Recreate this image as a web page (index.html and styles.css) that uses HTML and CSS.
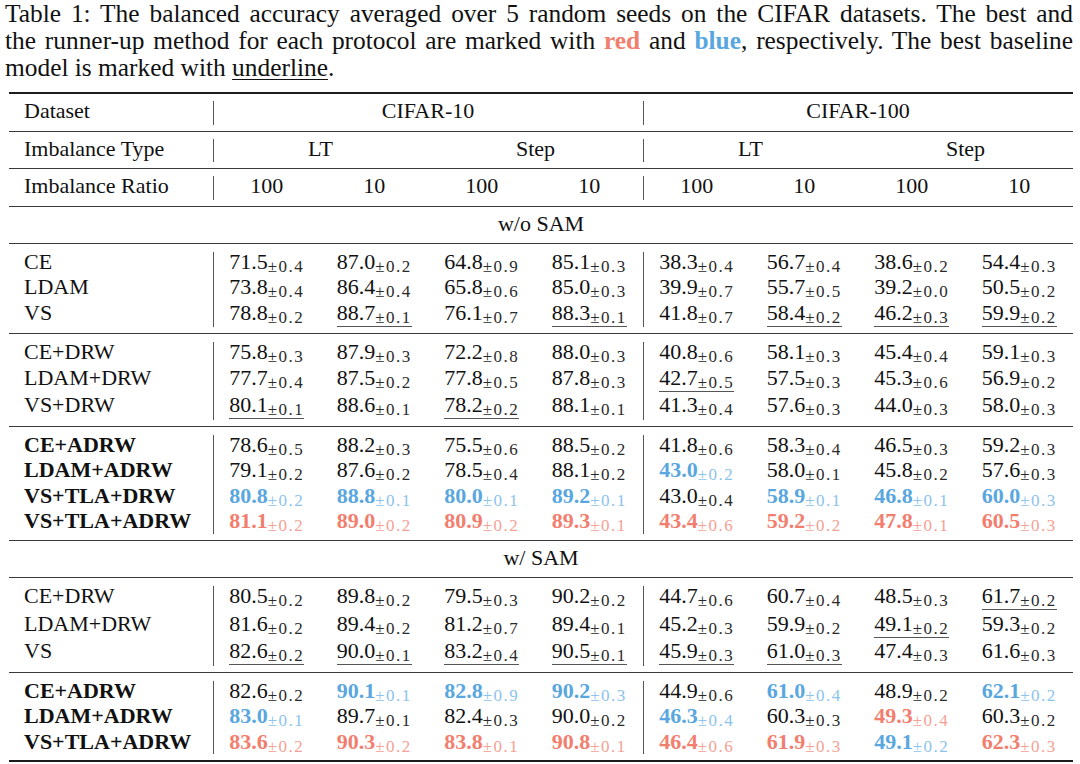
FILE: index.html
```html
<!DOCTYPE html>
<html lang="en">
<head>
<meta charset="utf-8">
<title>Table 1</title>
<link rel="stylesheet" href="styles.css">
</head>
<body>
<div class="page">
  <p class="caption">
    <span class="cl">Table 1: The balanced accuracy averaged over 5 random seeds on the CIFAR datasets. The best and</span>
    <span class="cl">the runner-up method for each protocol are marked with <b class="red">red</b> and <b class="blue">blue</b>, respectively. The best baseline</span>
    <span class="cl last">model is marked with <u>underline</u>.</span>
  </p>

  <div class="tbl">
    <div class="hrow">
      <div class="lab">Dataset</div>
      <div class="hh">CIFAR-10</div>
      <div class="hh">CIFAR-100</div>
    </div>
    <div class="hrow">
      <div class="lab">Imbalance Type</div>
      <div class="hh two"><span>LT</span><span>Step</span></div>
      <div class="hh two"><span>LT</span><span>Step</span></div>
    </div>
    <div class="hrow">
      <div class="lab">Imbalance Ratio</div>
      <div class="hh four"><span>100</span><span>10</span><span>100</span><span>10</span></div>
      <div class="hh four"><span>100</span><span>10</span><span>100</span><span>10</span></div>
    </div>

    <div class="sect">w/o SAM</div>

    <div class="group">
      <div class="labels">
        <div class="r">CE</div>
        <div class="r">LDAM</div>
        <div class="r u">VS</div>
      </div>
      <div class="half">
        <div class="r"><span class="v">71.5<span class="sd">±0.4</span></span><span class="v">87.0<span class="sd">±0.2</span></span><span class="v">64.8<span class="sd">±0.9</span></span><span class="v">85.1<span class="sd">±0.3</span></span></div>
        <div class="r"><span class="v">73.8<span class="sd">±0.4</span></span><span class="v">86.4<span class="sd">±0.4</span></span><span class="v">65.8<span class="sd">±0.6</span></span><span class="v">85.0<span class="sd">±0.3</span></span></div>
        <div class="r u"><span class="v">78.8<span class="sd">±0.2</span></span><span class="v"><span class="ul">88.7<span class="sd">±0.1</span></span></span><span class="v">76.1<span class="sd">±0.7</span></span><span class="v"><span class="ul">88.3<span class="sd">±0.1</span></span></span></div>
      </div>
      <div class="half">
        <div class="r"><span class="v">38.3<span class="sd">±0.4</span></span><span class="v">56.7<span class="sd">±0.4</span></span><span class="v">38.6<span class="sd">±0.2</span></span><span class="v">54.4<span class="sd">±0.3</span></span></div>
        <div class="r"><span class="v">39.9<span class="sd">±0.7</span></span><span class="v">55.7<span class="sd">±0.5</span></span><span class="v">39.2<span class="sd">±0.0</span></span><span class="v">50.5<span class="sd">±0.2</span></span></div>
        <div class="r u"><span class="v">41.8<span class="sd">±0.7</span></span><span class="v"><span class="ul">58.4<span class="sd">±0.2</span></span></span><span class="v"><span class="ul">46.2<span class="sd">±0.3</span></span></span><span class="v"><span class="ul">59.9<span class="sd">±0.2</span></span></span></div>
      </div>
    </div>

    <div class="group">
      <div class="labels">
        <div class="r">CE+DRW</div>
        <div class="r u">LDAM+DRW</div>
        <div class="r u">VS+DRW</div>
      </div>
      <div class="half">
        <div class="r"><span class="v">75.8<span class="sd">±0.3</span></span><span class="v">87.9<span class="sd">±0.3</span></span><span class="v">72.2<span class="sd">±0.8</span></span><span class="v">88.0<span class="sd">±0.3</span></span></div>
        <div class="r u"><span class="v">77.7<span class="sd">±0.4</span></span><span class="v">87.5<span class="sd">±0.2</span></span><span class="v">77.8<span class="sd">±0.5</span></span><span class="v">87.8<span class="sd">±0.3</span></span></div>
        <div class="r u"><span class="v"><span class="ul">80.1<span class="sd">±0.1</span></span></span><span class="v">88.6<span class="sd">±0.1</span></span><span class="v"><span class="ul">78.2<span class="sd">±0.2</span></span></span><span class="v">88.1<span class="sd">±0.1</span></span></div>
      </div>
      <div class="half">
        <div class="r"><span class="v">40.8<span class="sd">±0.6</span></span><span class="v">58.1<span class="sd">±0.3</span></span><span class="v">45.4<span class="sd">±0.4</span></span><span class="v">59.1<span class="sd">±0.3</span></span></div>
        <div class="r u"><span class="v"><span class="ul">42.7<span class="sd">±0.5</span></span></span><span class="v">57.5<span class="sd">±0.3</span></span><span class="v">45.3<span class="sd">±0.6</span></span><span class="v">56.9<span class="sd">±0.2</span></span></div>
        <div class="r u"><span class="v">41.3<span class="sd">±0.4</span></span><span class="v">57.6<span class="sd">±0.3</span></span><span class="v">44.0<span class="sd">±0.3</span></span><span class="v">58.0<span class="sd">±0.3</span></span></div>
      </div>
    </div>

    <div class="group">
      <div class="labels bold">
        <div class="r">CE+ADRW</div>
        <div class="r">LDAM+ADRW</div>
        <div class="r">VS+TLA+DRW</div>
        <div class="r">VS+TLA+ADRW</div>
      </div>
      <div class="half">
        <div class="r"><span class="v">78.6<span class="sd">±0.5</span></span><span class="v">88.2<span class="sd">±0.3</span></span><span class="v">75.5<span class="sd">±0.6</span></span><span class="v">88.5<span class="sd">±0.2</span></span></div>
        <div class="r"><span class="v">79.1<span class="sd">±0.2</span></span><span class="v">87.6<span class="sd">±0.2</span></span><span class="v">78.5<span class="sd">±0.4</span></span><span class="v">88.1<span class="sd">±0.2</span></span></div>
        <div class="r"><span class="v second">80.8<span class="sd">±0.2</span></span><span class="v second">88.8<span class="sd">±0.1</span></span><span class="v second">80.0<span class="sd">±0.1</span></span><span class="v second">89.2<span class="sd">±0.1</span></span></div>
        <div class="r"><span class="v best">81.1<span class="sd">±0.2</span></span><span class="v best">89.0<span class="sd">±0.2</span></span><span class="v best">80.9<span class="sd">±0.2</span></span><span class="v best">89.3<span class="sd">±0.1</span></span></div>
      </div>
      <div class="half">
        <div class="r"><span class="v">41.8<span class="sd">±0.6</span></span><span class="v">58.3<span class="sd">±0.4</span></span><span class="v">46.5<span class="sd">±0.3</span></span><span class="v">59.2<span class="sd">±0.3</span></span></div>
        <div class="r"><span class="v second">43.0<span class="sd">±0.2</span></span><span class="v">58.0<span class="sd">±0.1</span></span><span class="v">45.8<span class="sd">±0.2</span></span><span class="v">57.6<span class="sd">±0.3</span></span></div>
        <div class="r"><span class="v">43.0<span class="sd">±0.4</span></span><span class="v second">58.9<span class="sd">±0.1</span></span><span class="v second">46.8<span class="sd">±0.1</span></span><span class="v second">60.0<span class="sd">±0.3</span></span></div>
        <div class="r"><span class="v best">43.4<span class="sd">±0.6</span></span><span class="v best">59.2<span class="sd">±0.2</span></span><span class="v best">47.8<span class="sd">±0.1</span></span><span class="v best">60.5<span class="sd">±0.3</span></span></div>
      </div>
    </div>

    <div class="sect">w/ SAM</div>

    <div class="group">
      <div class="labels">
        <div class="r u">CE+DRW</div>
        <div class="r u">LDAM+DRW</div>
        <div class="r u">VS</div>
      </div>
      <div class="half">
        <div class="r u"><span class="v">80.5<span class="sd">±0.2</span></span><span class="v">89.8<span class="sd">±0.2</span></span><span class="v">79.5<span class="sd">±0.3</span></span><span class="v">90.2<span class="sd">±0.2</span></span></div>
        <div class="r u"><span class="v">81.6<span class="sd">±0.2</span></span><span class="v">89.4<span class="sd">±0.2</span></span><span class="v">81.2<span class="sd">±0.7</span></span><span class="v">89.4<span class="sd">±0.1</span></span></div>
        <div class="r u"><span class="v"><span class="ul">82.6<span class="sd">±0.2</span></span></span><span class="v"><span class="ul">90.0<span class="sd">±0.1</span></span></span><span class="v"><span class="ul">83.2<span class="sd">±0.4</span></span></span><span class="v"><span class="ul">90.5<span class="sd">±0.1</span></span></span></div>
      </div>
      <div class="half">
        <div class="r u"><span class="v">44.7<span class="sd">±0.6</span></span><span class="v">60.7<span class="sd">±0.4</span></span><span class="v">48.5<span class="sd">±0.3</span></span><span class="v"><span class="ul">61.7<span class="sd">±0.2</span></span></span></div>
        <div class="r u"><span class="v">45.2<span class="sd">±0.3</span></span><span class="v">59.9<span class="sd">±0.2</span></span><span class="v"><span class="ul">49.1<span class="sd">±0.2</span></span></span><span class="v">59.3<span class="sd">±0.2</span></span></div>
        <div class="r u"><span class="v"><span class="ul">45.9<span class="sd">±0.3</span></span></span><span class="v"><span class="ul">61.0<span class="sd">±0.3</span></span></span><span class="v">47.4<span class="sd">±0.3</span></span><span class="v">61.6<span class="sd">±0.3</span></span></div>
      </div>
    </div>

    <div class="group last">
      <div class="labels bold">
        <div class="r">CE+ADRW</div>
        <div class="r">LDAM+ADRW</div>
        <div class="r">VS+TLA+ADRW</div>
      </div>
      <div class="half">
        <div class="r"><span class="v">82.6<span class="sd">±0.2</span></span><span class="v second">90.1<span class="sd">±0.1</span></span><span class="v second">82.8<span class="sd">±0.9</span></span><span class="v second">90.2<span class="sd">±0.3</span></span></div>
        <div class="r"><span class="v second">83.0<span class="sd">±0.1</span></span><span class="v">89.7<span class="sd">±0.1</span></span><span class="v">82.4<span class="sd">±0.3</span></span><span class="v">90.0<span class="sd">±0.2</span></span></div>
        <div class="r"><span class="v best">83.6<span class="sd">±0.2</span></span><span class="v best">90.3<span class="sd">±0.2</span></span><span class="v best">83.8<span class="sd">±0.1</span></span><span class="v best">90.8<span class="sd">±0.1</span></span></div>
      </div>
      <div class="half">
        <div class="r"><span class="v">44.9<span class="sd">±0.6</span></span><span class="v second">61.0<span class="sd">±0.4</span></span><span class="v">48.9<span class="sd">±0.2</span></span><span class="v second">62.1<span class="sd">±0.2</span></span></div>
        <div class="r"><span class="v second">46.3<span class="sd">±0.4</span></span><span class="v">60.3<span class="sd">±0.3</span></span><span class="v best">49.3<span class="sd">±0.4</span></span><span class="v">60.3<span class="sd">±0.2</span></span></div>
        <div class="r"><span class="v best">46.4<span class="sd">±0.6</span></span><span class="v best">61.9<span class="sd">±0.3</span></span><span class="v second">49.1<span class="sd">±0.2</span></span><span class="v best">62.3<span class="sd">±0.3</span></span></div>
      </div>
    </div>
  </div>
</div>
</body>
</html>
```

FILE: styles.css
```css
html, body {
  margin: 0;
  padding: 0;
  background: #ffffff;
}

body {
  color: #111111;
  font-family: "Liberation Serif", "Times New Roman", serif;
}

.page {
  width: 1068px;
  padding-left: 5px;
}

/* ---------- caption ---------- */
.caption {
  margin: 0;
  font-size: 25.4px;
  line-height: 27px;
}

.cl {
  display: block;
  text-align: justify;
  text-align-last: justify;
}

.cl.last {
  text-align: left;
  text-align-last: left;
}

.caption u {
  text-decoration-thickness: 1px;
  text-underline-offset: 3px;
}

.red {
  color: #f27e6e;
}

.blue {
  color: #5aa7df;
}

/* ---------- table ---------- */
.tbl {
  margin: 11px 0 0 4px;
  width: 1064px;
  border-top: 2px solid #1c1c1c;
  border-bottom: 2px solid #1c1c1c;
  font-size: 22px;
}

.hrow {
  display: grid;
  grid-template-columns: 204px 430px 430px;
  box-sizing: border-box;
  height: 37.5px;
  line-height: 34px;
  border-bottom: 1px solid #3a3a3a;
}

.lab {
  padding-left: 15px;
}

.hh {
  text-align: center;
  background: linear-gradient(#555555, #555555) no-repeat 0 7px / 1.2px calc(100% - 13px);
}

.hh.two {
  display: grid;
  grid-template-columns: 1fr 1fr;
}

.hh.four {
  display: grid;
  grid-template-columns: repeat(4, 1fr);
}

.sect {
  box-sizing: border-box;
  height: 37.3px;
  line-height: 34px;
  text-align: center;
  border-bottom: 1px solid #3a3a3a;
}

.group {
  display: grid;
  grid-template-columns: 204px 430px 430px;
  padding: 5px 0 6px;
  border-bottom: 1px solid #3a3a3a;
}

.group.last {
  border-bottom: none;
}

.labels {
  padding-left: 15px;
}

.labels.bold {
  font-weight: bold;
}

.r {
  height: 25.5px;
  line-height: 25.5px;
  white-space: nowrap;
}

.r.u {
  padding-bottom: 2px;
}

.half {
  background: linear-gradient(#555555, #555555) no-repeat 0 3px / 1.2px calc(100% - 3px);
}

.half > .r {
  display: grid;
  grid-template-columns: repeat(4, 1fr);
  text-align: center;
}

.sd {
  font-size: 17px;
  letter-spacing: 1.5px;
  line-height: 0;
  vertical-align: -3px;
  color: #2a2a2a;
}

.ul {
  border-bottom: 1px solid #555555;
  padding-bottom: 1px;
}

.v.best {
  font-weight: bold;
  color: #f27e6e;
}

.v.best .sd {
  font-weight: normal;
  color: #f5a195;
}

.v.second {
  font-weight: bold;
  color: #5aa7df;
}

.v.second .sd {
  font-weight: normal;
  color: #8cc3ec;
}
```
